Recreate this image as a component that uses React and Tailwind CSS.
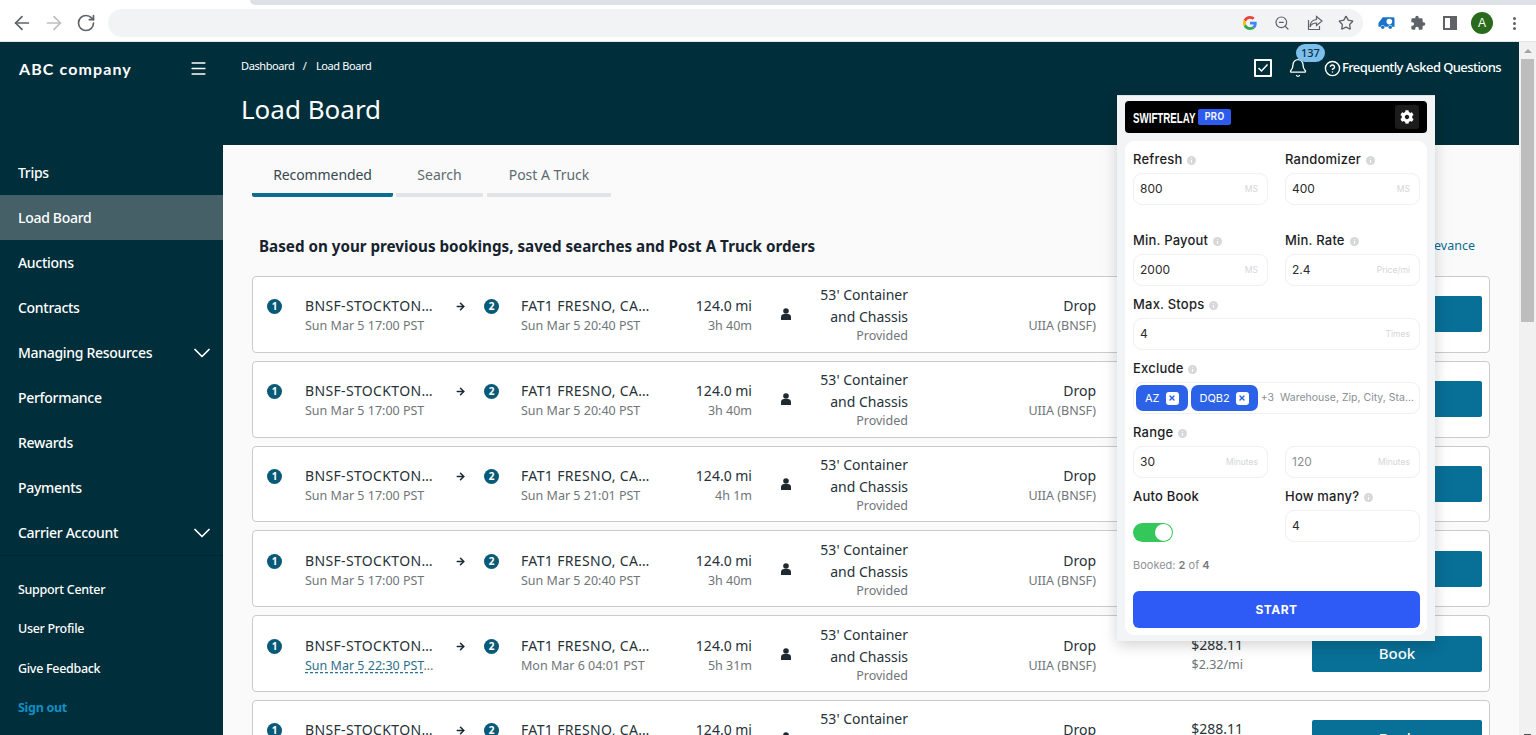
import React from 'react'
import { ArrowLeft, ArrowRight, RotateCw, ZoomOut, Star, Bell, Menu, ChevronDown, CircleHelp, X } from 'lucide-react'
import { FaCog } from 'react-icons/fa'

const nav = [
  { name: 'Trips' },
  { name: 'Load Board', active: true },
  { name: 'Auctions' },
  { name: 'Contracts' },
  { name: 'Managing Resources', arrow: true },
  { name: 'Performance' },
  { name: 'Rewards' },
  { name: 'Payments' },
  { name: 'Carrier Account', arrow: true },
]

const rows = [
  { from: 'Sun Mar 5 17:00 PST', to: 'Sun Mar 5 20:40 PST', time: '3h 40m' },
  { from: 'Sun Mar 5 17:00 PST', to: 'Sun Mar 5 20:40 PST', time: '3h 40m' },
  { from: 'Sun Mar 5 17:00 PST', to: 'Sun Mar 5 21:01 PST', time: '4h 1m' },
  { from: 'Sun Mar 5 17:00 PST', to: 'Sun Mar 5 20:40 PST', time: '3h 40m' },
  { from: 'Sun Mar 5 22:30 PST', to: 'Mon Mar 6 04:01 PST', time: '5h 31m', late: true },
  { from: 'Sun Mar 5 17:00 PST', to: 'Sun Mar 5 20:40 PST', time: '3h 40m' },
]

const sans = "font-['Noto_Sans','Open_Sans',sans-serif]"
const ext = "font-['Inter','Lato',sans-serif]"

const Dot = ({ n }) => (
  <div className="w-[15px] h-[15px] rounded-full bg-[#085a78] text-white text-[10px] font-bold leading-[15px] text-center shrink-0">{n}</div>
)

const Row = ({ item }) => (
  <div className="h-[76.800px] mb-[8px] bg-white border border-[#c9cbcc] rounded-[4px] flex items-center shrink-0">
    <div className="ml-[14px] -mt-[15px]"><Dot n="1" /></div>
    <div className="ml-[23px] w-[132px] mt-[2px]">
      <p className="text-[14px] leading-[20px] text-[#263238] whitespace-nowrap tracking-[0.35px]">BNSF-STOCKTON…</p>
      {item.late ? (
        <p className="mt-[1px] text-[12.5px] leading-[17px] text-[#6f7578] whitespace-nowrap">
          <span className="text-[#2b6f8c] underline decoration-dashed underline-offset-2">{item.from}</span>…
        </p>
      ) : (
        <p className="mt-[1px] text-[12.5px] leading-[17px] text-[#6f7578] whitespace-nowrap">{item.from}</p>
      )}
    </div>
    <ArrowRight size={11} strokeWidth={3.400} className="ml-[18px] -mt-[15px] text-[#1c2a33] shrink-0" />
    <div className="ml-[18px] -mt-[15px]"><Dot n="2" /></div>
    <div className="ml-[22px] w-[130px] mt-[2px]">
      <p className="text-[14px] leading-[20px] text-[#263238] whitespace-nowrap tracking-[0.35px]">FAT1 FRESNO, CA…</p>
      <p className="mt-[1px] text-[12.5px] leading-[17px] text-[#6f7578] whitespace-nowrap">{item.to}</p>
    </div>
    <div className="w-[101px] text-right mt-[2px]">
      <p className="text-[14px] leading-[20px] text-[#263238]">124.0 mi</p>
      <p className="mt-[1px] text-[12.5px] leading-[17px] text-[#6f7578]">{item.time}</p>
    </div>
    <svg className="ml-[28px] shrink-0" width="12" height="12" viewBox="0 0 12 12" fill="#1f2a30">
      <circle cx="6" cy="3" r="2.800" />
      <path d="M1 12V9c0-2 1.500-3 3-3h4c1.500 0 3 1 3 3v3z" />
    </svg>
    <div className="w-[116px] text-right">
      <p className="text-[14px] leading-[22px] text-[#263238]">53' Container</p>
      <p className="text-[14px] leading-[21px] text-[#263238]">and Chassis</p>
      <p className="text-[12.5px] leading-[17px] text-[#6f7578]">Provided</p>
    </div>
    <div className="w-[188px] text-right mt-[2px]">
      <p className="text-[14px] leading-[20px] text-[#263238]">Drop</p>
      <p className="mt-[1px] text-[12.5px] leading-[17px] text-[#6f7578]">UIIA (BNSF)</p>
    </div>
    <div className="w-[147px] text-right mt-[2px]">
      <p className="text-[14px] leading-[20px] text-[#263238]">$288.11</p>
      <p className="text-[12.5px] leading-[20px] text-[#6f7578]">$2.32/mi</p>
    </div>
    <button className="ml-[69px] w-[170px] h-[36px] bg-[#086f96] rounded-[2px] text-white text-[15px] font-medium">Book</button>
  </div>
)

const Info = () => (
  <svg className="ml-[5px] shrink-0" width="9" height="9" viewBox="0 0 9 9">
    <circle cx="4.500" cy="4.500" r="4.500" fill="#d6d8da" />
    <path d="M4.500 2.200v.8M4.500 4v2.800" stroke="#fff" strokeWidth="1.100" />
  </svg>
)

const Label = ({ text, info = true, className = '' }) => (
  <div className={`h-[18px] flex items-center text-[13px] font-medium tracking-[0.2px] text-[#1d1d1f] ${className}`}>
    {text}{info && <Info />}
  </div>
)

const Field = ({ value, unit, muted }) => (
  <div className="h-[32px] border border-[#eef0f1] rounded-[9px] bg-white flex items-center justify-between pl-[6px] pr-[9px]">
    <span className={muted ? 'text-[12px] text-[#8b8f94]' : 'text-[12px] text-[#2b2b2b]'}>{value}</span>
    <span className="text-[8.5px] text-[#d4d6d8]">{unit}</span>
  </div>
)

const Chip = ({ text }) => (
  <div className="h-[26px] px-[9px] rounded-[7px] bg-[#2c62e8] flex items-center gap-[6px] text-white text-[11px]">
    {text}
    <span className="w-[13px] h-[13px] rounded-[3px] bg-white flex items-center justify-center">
      <X size={8} strokeWidth={4} className="text-[#2c62e8]" />
    </span>
  </div>
)

const Panel = () => (
  <div className={`absolute left-[1117px] top-[95px] w-[318px] h-[546px] bg-[#f3f4f5] border-t border-[#dfe3e4] shadow-[0_4px_14px_rgba(0,0,0,0.18)] px-[8px] pt-[5px] ${ext}`}>
    <div className="h-[32px] bg-black rounded-[4px] flex items-center pl-[8px] pr-[8px]">
      <div className="w-[60px] shrink-0">
        <span className="inline-block origin-left scale-x-[0.65] text-white text-[15px] font-bold font-['Liberation_Sans',sans-serif] whitespace-nowrap">SWIFTRELAY</span>
      </div>
      <div className="ml-[5px] w-[33px] h-[16px] rounded-[2px] bg-[#2d5bf0] flex items-center justify-center">
        <span className="scale-x-[0.85] text-white text-[10px] font-bold leading-[16px] font-['Liberation_Sans',sans-serif] tracking-[0.5px]">PRO</span>
      </div>
      <div className="ml-auto w-[24px] h-[24px] rounded-[3px] bg-[#1c1c1c] flex items-center justify-center">
        <FaCog size={14} className="text-white" />
      </div>
    </div>
    <div className="mt-[8px] h-[494px] bg-white rounded-[9px] pl-[8px] pr-[7px] pt-[10px]">
      <div className="grid grid-cols-2 gap-x-[17px]">
        <div><Label text="Refresh" className="mb-[4px]" /><Field value="800" unit="MS" /></div>
        <div><Label text="Randomizer" className="mb-[4px]" /><Field value="400" unit="MS" /></div>
      </div>
      <div className="grid grid-cols-2 gap-x-[17px] mt-[27px]">
        <div><Label text="Min. Payout" className="mb-[4px]" /><Field value="2000" unit="MS" /></div>
        <div><Label text="Min. Rate" className="mb-[4px]" /><Field value="2.4" unit="Price/mi" /></div>
      </div>
      <div className="mt-[10px]">
        <Label text="Max. Stops" className="mb-[4px]" />
        <Field value="4" unit="Times" />
      </div>
      <div className="mt-[10px]">
        <Label text="Exclude" className="mb-[4px]" />
        <div className="h-[32px] border border-[#eef0f1] rounded-[9px] flex items-center pl-[2px] gap-[3px] overflow-hidden">
          <Chip text="AZ" />
          <Chip text="DQB2" />
          <span className="text-[10.5px] text-[#8b8f94] whitespace-nowrap">+3&nbsp; Warehouse, Zip, City, Sta...</span>
        </div>
      </div>
      <div className="mt-[10px]">
        <Label text="Range" className="mb-[4px]" />
        <div className="grid grid-cols-2 gap-x-[17px]">
          <Field value="30" unit="Minutes" />
          <Field value="120" unit="Minutes" muted />
        </div>
      </div>
      <div className="grid grid-cols-2 gap-x-[17px] mt-[10px]">
        <div>
          <Label text="Auto Book" info={false} />
          <div className="mt-[17px] w-[40px] h-[19px] rounded-full bg-[#34c759] relative">
            <div className="absolute right-[1px] top-[1px] w-[17px] h-[17px] rounded-full bg-white" />
          </div>
        </div>
        <div><Label text="How many?" className="mb-[4px]" /><Field value="4" /></div>
      </div>
      <p className="mt-[15px] text-[11px] leading-[16px] text-[#8f9296]">Booked: <span className="font-semibold text-[#77797c]">2</span> of <span className="font-semibold text-[#77797c]">4</span></p>
      <button className="mt-[18px] w-full h-[37px] rounded-[6px] bg-[#2e5bf5] text-white text-[12px] font-bold tracking-[0.5px]">START</button>
    </div>
  </div>
)

const BrowserBar = () => (
  <div className="h-[42px] bg-white relative shrink-0 flex items-center pt-[5px] pl-[11px] border-b border-[#e3e4e6]">
    <div className="absolute left-[250px] right-0 top-0 h-[5px] bg-[#dee1e6] rounded-bl-[6px]" />
    <ArrowLeft size={22} strokeWidth={1.900} className="text-[#5f6368]" />
    <ArrowRight size={22} strokeWidth={1.900} className="ml-[10px] text-[#bcbec1]" />
    <RotateCw size={20} strokeWidth={2} className="ml-[11px] text-[#5f6368]" />
    <div className="ml-[12px] w-[1255px] h-[28px] rounded-full bg-[#f1f3f4] flex items-center justify-end pr-[9px]">
      <svg width="14" height="14" viewBox="0 0 48 48">
        <path fill="#EA4335" d="M24 9.500c3.500 0 6.700 1.300 9.100 3.500l6.800-6.800C35.800 2.400 30.300 0 24 0 14.600 0 6.500 5.400 2.600 13.200l7.900 6.200C12.400 13.600 17.700 9.500 24 9.500z" />
        <path fill="#4285F4" d="M47 24.500c0-1.600-.1-3.100-.4-4.500H24v9h13c-.6 3-2.300 5.500-4.800 7.200l7.700 6c4.500-4.200 7.100-10.300 7.100-17.700z" />
        <path fill="#FBBC05" d="M10.500 28.600c-.5-1.400-.8-3-.8-4.600s.3-3.200.8-4.600l-7.900-6.200C.9 16.500 0 20.100 0 24s.9 7.500 2.600 10.800l7.900-6.200z" />
        <path fill="#34A853" d="M24 48c6.500 0 11.900-2.100 15.900-5.800l-7.700-6c-2.200 1.500-5 2.300-8.200 2.300-6.300 0-11.600-4.100-13.500-9.900l-7.900 6.200C6.500 42.600 14.600 48 24 48z" />
      </svg>
      <ZoomOut size={16} strokeWidth={1.800} className="ml-[17px] text-[#5f6368]" />
      <svg className="ml-[17px]" width="16" height="16" viewBox="0 0 16 16" fill="none" stroke="#5f6368" strokeWidth="1.200">
        <path d="M9.500 1.500 15 6l-5.500 4.500V8C6 8 4 9.500 3 12c0-4 2-7 6.500-7.500z" />
        <path d="M1.500 5v9.500h11V11" />
      </svg>
      <Star size={16} strokeWidth={2} className="ml-[15px] text-[#5f6368]" />
    </div>
    <svg className="ml-[15px]" width="17" height="14" viewBox="0 0 18 14">
      <path fill="#1a73c8" d="M5 1h11a1.500 1.500 0 0 1 1.500 1.500V11H15a2 2 0 0 0-4 0H7a2 2 0 0 0-4 0H.5V7L3 3.500z" />
      <circle cx="5" cy="11.500" r="1.800" fill="#1a73c8" />
      <circle cx="13" cy="11.500" r="1.800" fill="#1a73c8" />
      <circle cx="12" cy="5.500" r="3" fill="#fff" />
    </svg>
    <svg className="ml-[15px]" width="16" height="16" viewBox="0 0 24 24" fill="#5f6368">
      <path d="M20.500 11H19V7a2 2 0 0 0-2-2h-4V3.500a2.500 2.500 0 0 0-5 0V5H4a2 2 0 0 0-2 2v3.800h1.500a2.700 2.700 0 0 1 0 5.400H2V20a2 2 0 0 0 2 2h3.800v-1.500a2.700 2.700 0 0 1 5.400 0V22H17a2 2 0 0 0 2-2v-4h1.500a2.500 2.500 0 0 0 0-5z" />
    </svg>
    <div className="ml-[17px] w-[14px] h-[14px] border-[2px] border-[#5f6368] flex justify-end">
      <div className="w-[5px] h-full bg-[#5f6368]" />
    </div>
    <div className="ml-[14px] w-[22px] h-[22px] rounded-full bg-[#2a6a1c] text-white text-[12px] leading-[22px] text-center font-['Liberation_Sans',sans-serif]">A</div>
    <div className="ml-[20px] flex flex-col gap-[2px]">
      <span className="w-[3px] h-[3px] rounded-full bg-[#5f6368]" />
      <span className="w-[3px] h-[3px] rounded-full bg-[#5f6368]" />
      <span className="w-[3px] h-[3px] rounded-full bg-[#5f6368]" />
    </div>
  </div>
)

export default function App() {
  return (
    <div className={`w-[1536px] h-[735px] overflow-hidden relative flex flex-col ${sans}`}>
      <BrowserBar />
      <div className="flex flex-1 min-h-0">
        <div className="w-[223px] bg-[#002e3a] flex flex-col shrink-0">
          <div className="h-[108px] shrink-0 flex items-start justify-between pl-[19px] pr-[15px] pt-[15px]">
            <span className="text-white text-[16px] font-bold tracking-[1.100px] font-['Lato',sans-serif]">ABC company</span>
            <Menu size={19} strokeWidth={2} className="text-white mt-[2px]" />
          </div>
          <div className="border-b border-[#00262f]">
            {nav.map((item) => (
              <div key={item.name} className={item.active
                ? "h-[45px] pl-[18px] pr-[7px] flex items-center justify-between text-[14px] tracking-[-0.3px] font-medium text-white bg-[#456067]"
                : "h-[45px] pl-[18px] pr-[7px] flex items-center justify-between text-[14px] tracking-[-0.3px] font-medium text-white"}>
                {item.name}
                {item.arrow && <ChevronDown size={28} strokeWidth={1.500} />}
              </div>
            ))}
          </div>
          <div className="pl-[18px] pt-[14px] text-[12.5px] tracking-[-0.3px] font-medium text-white">
            <p className="h-[39.300px] leading-[39px]">Support Center</p>
            <p className="h-[39.300px] leading-[39px]">User Profile</p>
            <p className="h-[39.300px] leading-[39px]">Give Feedback</p>
            <p className="h-[39.300px] leading-[39px] font-bold text-[#0f8fc4]">Sign out</p>
          </div>
        </div>

        <div className="flex-1 min-w-0 bg-[#fafafa] flex flex-col">
          <div className="h-[103px] bg-[#002e3a] shrink-0 pl-[18px] pr-[18px]">
            <div className="flex items-start justify-between">
              <div>
                <p className="pt-[15px] text-[11px] tracking-[-0.4px] leading-[18px] text-white">Dashboard <span className="ml-[6px] mr-[7px]">/</span> Load Board</p>
                <h1 className="mt-[15px] text-[26px] leading-[38px] text-white">Load Board</h1>
              </div>
              <div className="flex items-center pt-[16px] text-white">
                <div className="w-[18px] h-[18px] border-[2px] border-white rounded-[1px] flex items-center justify-center">
                  <svg width="12" height="10" viewBox="0 0 12 10" fill="none" stroke="#fff" strokeWidth="1.500"><path d="M1.500 5 4.500 8l6-6.500" /></svg>
                </div>
                <div className="relative ml-[16px]">
                  <Bell size={20} strokeWidth={1.600} />
                  <span className="absolute -top-[14px] left-[8px] w-[29px] h-[18px] rounded-full bg-[#7dbfec] text-[#07303f] text-[11px] font-medium leading-[18px] text-center">137</span>
                </div>
                <CircleHelp size={17} strokeWidth={2} className="ml-[16px]" />
                <span className="ml-[1px] text-[13px] font-medium whitespace-nowrap tracking-[-0.58px]">Frequently Asked Questions</span>
              </div>
            </div>
          </div>

          <div className="pl-[29px] pr-[29px] flex-1 min-h-0">
            <div className="flex pt-[19px] h-[52px]">
              <div className="w-[141px] border-b-[4px] border-[#0b6d91] rounded-b-[2px] text-center text-[14px] tracking-[-0.1px] text-[#37474f]">Recommended</div>
              <div className="ml-[3px] w-[87px] border-b-[4px] border-[#e3e4e5] text-center text-[14px] text-[#5d6a70]">Search</div>
              <div className="ml-[4px] w-[124px] border-b-[4px] border-[#e3e4e5] text-center text-[14px] text-[#5d6a70]">Post A Truck</div>
            </div>
            <div className="mt-[35px] pl-[7px] flex items-center justify-between h-[28px]">
              <h2 className="text-[15.200px] font-bold text-[#16232f]">Based on your previous bookings, saved searches and Post A Truck orders</h2>
              <span className="mr-[15px] text-[12.5px] text-[#0d6a8f]">Sort by relevance</span>
            </div>
            <div className="mt-[16px]">
              {rows.map((item, i) => <Row key={i} item={item} />)}
            </div>
          </div>
        </div>

        <div className="w-[17px] bg-[#f1f1f1] shrink-0 flex flex-col items-center">
          <div className="h-[17px] flex items-center">
            <div className="w-0 h-0 border-x-[4px] border-x-transparent border-b-[4px] border-b-[#a3a3a3]" />
          </div>
          <div className="w-[13px] h-[263px] bg-[#bdbdbd]" />
          <div className="mt-auto w-[7px] h-[1px] bg-[#505050]" />
        </div>
      </div>
      <Panel />
    </div>
  )
}
